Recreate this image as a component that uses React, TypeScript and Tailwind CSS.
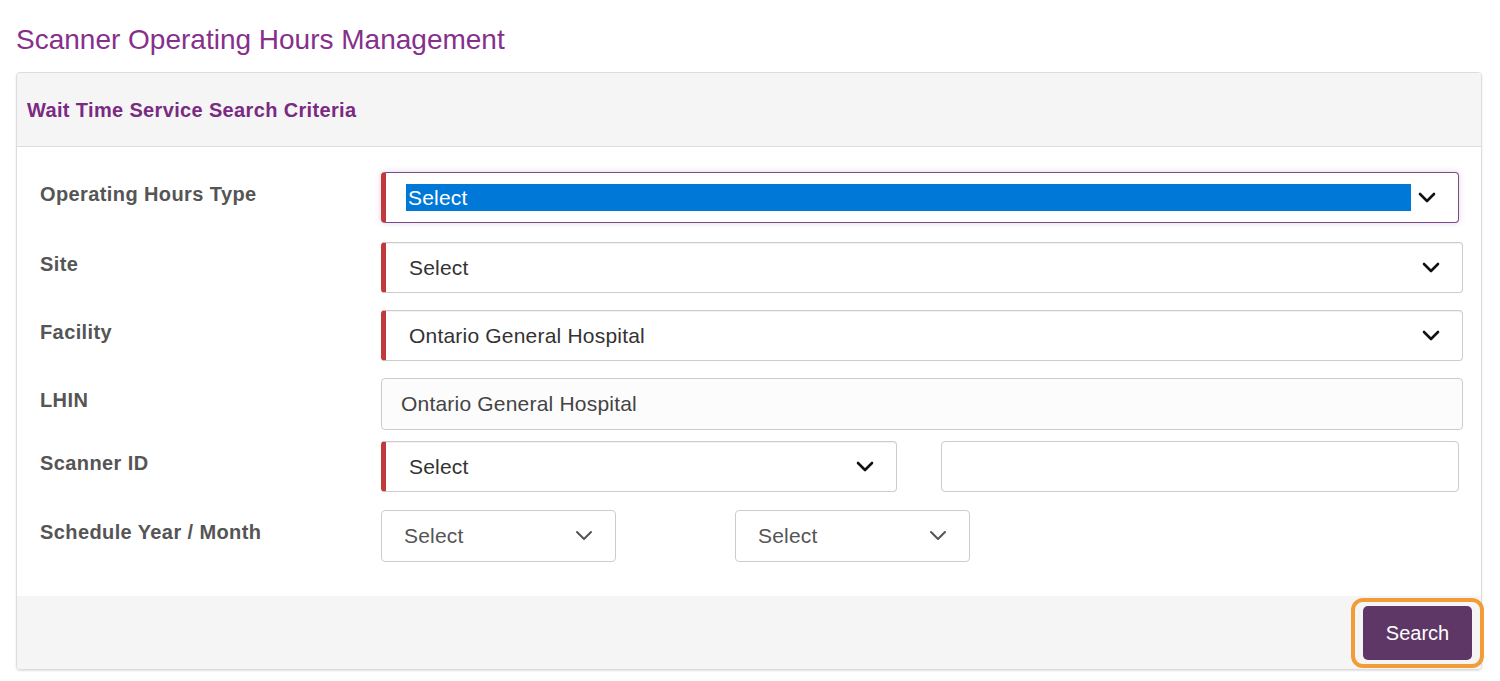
function Chevron({ muted }: { muted?: boolean }) {
  return (
    <svg className="w-[18px] h-[12px]" viewBox="0 0 18 12" fill="none">
      <polyline
        points="2,2 9,9 16,2"
        stroke={muted ? '#555555' : '#111111'}
        strokeWidth={muted ? 2 : 2.6}
        strokeLinecap="round"
        strokeLinejoin="round"
      />
    </svg>
  );
}

function SelectBox({ value, required, className = '' }: { value: string; required?: boolean; className?: string }) {
  return (
    <div
      className={`h-[51px] flex items-center justify-between bg-white border border-[#cccccc] rounded-[4px] shadow-[inset_0_1px_1px_rgba(0,0,0,0.06)] ${
        required ? 'border-l-[5px] border-l-[#c0393b] pl-[23px]' : 'pl-[22px]'
      } pr-[22px] ${className}`}
    >
      <span className="text-[21px] tracking-[0.2px] text-[#333333]">{value}</span>
      <Chevron />
    </div>
  );
}

function Row({ label, children }: { label: string; children: React.ReactNode }) {
  return (
    <div className="flex items-center">
      <div className="w-[341px] shrink-0 pb-[8px] text-[20px] tracking-[0.4px] font-bold text-[#555555]">{label}</div>
      <div className="flex-1">{children}</div>
    </div>
  );
}

export default function App() {
  return (
    <div className="min-h-screen bg-white px-[16px] pt-[21px] font-['Liberation_Sans',Arial,sans-serif]">
      <h1 className="text-[28px] leading-[37px] text-[#862f8c] mb-[14px]">Scanner Operating Hours Management</h1>
      <div className="w-[1466px] border border-[#dddddd] rounded-[4px] shadow-[0_1px_2px_rgba(0,0,0,0.12)]">
        <div className="h-[74px] bg-[#f5f5f5] border-b border-[#dddddd] rounded-t-[4px] flex items-center pl-[10px]">
          <span className="text-[20px] tracking-[0.35px] font-bold text-[#7a2a83]">Wait Time Service Search Criteria</span>
        </div>
        <div className="bg-white pl-[23px] pr-[18px] pt-[25px] pb-[34px] flex flex-col">
          <Row label="Operating Hours Type">
            <div className="mr-[4px] h-[51px] flex items-center justify-between bg-white border border-[#7b4a86] border-l-[5px] border-l-[#c0393b] rounded-[4px] shadow-[0_0_6px_rgba(150,80,170,0.25)] pl-[20px] pr-[22px]">
              <span className="flex-1 mr-[7px] h-[27px] bg-[#0078d7] text-white text-[21px] leading-[27px] tracking-[0.2px] pl-[2px]">Select</span>
              <Chevron />
            </div>
          </Row>
          <div className="h-[19px]" />
          <Row label="Site">
            <SelectBox value="Select" required />
          </Row>
          <div className="h-[17px]" />
          <Row label="Facility">
            <SelectBox value="Ontario General Hospital" required />
          </Row>
          <div className="h-[17px]" />
          <Row label="LHIN">
            <div className="h-[52px] flex items-center bg-[#fcfcfc] border border-[#cccccc] rounded-[4px] pl-[19px] text-[21px] tracking-[0.2px] text-[#444444]">
              Ontario General Hospital
            </div>
          </Row>
          <div className="h-[11px]" />
          <Row label="Scanner ID">
            <div className="flex items-center gap-[44px] mr-[4px]">
              <SelectBox value="Select" required className="w-[516px]" />
              <div className="flex-1 h-[51px] bg-white border border-[#cccccc] rounded-[4px]" />
            </div>
          </Row>
          <div className="h-[18px]" />
          <Row label="Schedule Year / Month">
            <div className="flex items-center gap-[119px]">
              {[0, 1].map((i) => (
                <div
                  key={i}
                  className="w-[235px] h-[52px] flex items-center justify-between bg-white border border-[#cccccc] rounded-[4px] pl-[22px] pr-[22px]"
                >
                  <span className="text-[21px] tracking-[0.2px] text-[#555555]">Select</span>
                  <Chevron muted />
                </div>
              ))}
            </div>
          </Row>
        </div>
        <div className="h-[73px] bg-[#f5f5f5] rounded-b-[4px] flex items-center justify-end">
          <div className="px-[8px] py-[4px] border-[4px] border-[#f29c38] rounded-[12px] mr-[-3px]">
            <button className="w-[109px] h-[54px] bg-[#5e3766] rounded-[5px] text-white text-[20px]">Search</button>
          </div>
        </div>
      </div>
    </div>
  );
}
